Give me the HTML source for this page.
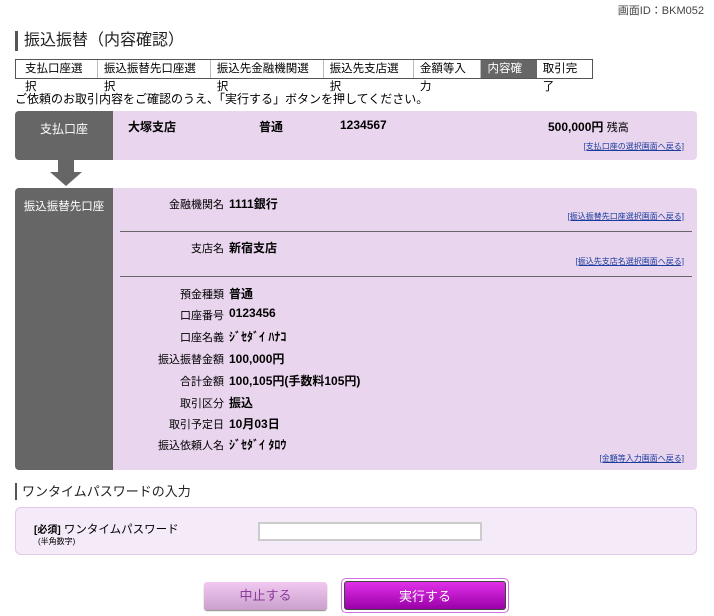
<!DOCTYPE html>
<html><head><meta charset="utf-8"><style>
*{margin:0;padding:0;box-sizing:border-box}
body{width:714px;height:616px;background:#fff;font-family:"Liberation Sans","Noto Sans CJK JP",sans-serif;color:#000;position:relative;overflow:hidden;font-size:12px}
.a{position:absolute;white-space:nowrap}
.lk{color:#1a3c9c;text-decoration:underline;font-size:8px}
.lb{position:absolute;right:490px;text-align:right;font-size:11px}
.v{position:absolute;left:229px;font-weight:bold;font-size:12px}
.bc{position:absolute;top:59px;left:15px;width:578px;height:20px;border:1px solid #555;display:flex;font-size:11.5px;line-height:18px}
.bc span{padding:0 4px 0 6px;border-right:1px solid #bbb}
</style></head><body>
<div class="a" style="right:10px;top:2px;font-size:11px;color:#444">画面ID：BKM052</div>
<div class="a" style="left:15px;top:31px;height:20px;border-left:3px solid #555;padding-left:6px;font-size:16px;line-height:20px;color:#222">振込振替（内容確認）</div>
<div class="bc"><span style="padding-left:9px">支払口座選択</span><span>振込振替先口座選択</span><span>振込先金融機関選択</span><span>振込先支店選択</span><span>金額等入力</span><span style="background:#666;color:#fff;border:none">内容確認</span><span style="border:none">取引完了</span></div>
<div class="a" style="left:15px;top:90px;font-size:12px">ご依頼のお取引内容をご確認のうえ、「実行する」ボタンを押してください。</div>

<div class="a" style="left:15px;top:111px;width:682px;height:49px;background:#e9d5ee;border-radius:4px"></div>
<div class="a" style="left:15px;top:111px;width:98px;height:49px;background:#666;border-radius:4px 0 0 4px;color:#fff;font-size:12px;text-align:center;line-height:36px">支払口座</div>
<div class="a" style="left:128px;top:118px;font-weight:bold">大塚支店</div>
<div class="a" style="left:259px;top:118px;font-weight:bold">普通</div>
<div class="a" style="left:340px;top:118px;font-weight:bold">1234567</div>
<div class="a" style="left:548px;top:118px;font-weight:bold">500,000円 <span style="font-weight:normal;font-size:11px">残高</span></div>
<div class="a lk" style="right:30px;top:141px">[支払口座の選択画面へ戻る]</div>
<div class="a" style="left:50px;top:160px;width:0;height:0;border-left:16px solid transparent;border-right:16px solid transparent;border-top:0"></div>
<div class="a" style="left:58px;top:160px;width:16px;height:12px;background:#666"></div>
<div class="a" style="left:50px;top:172px;width:0;height:0;border-left:16px solid transparent;border-right:16px solid transparent;border-top:14px solid #666"></div>

<div class="a" style="left:15px;top:188px;width:682px;height:282px;background:#e9d5ee;border-radius:4px"></div>
<div class="a" style="left:15px;top:188px;width:98px;height:282px;background:#666;border-radius:4px 0 0 4px;color:#fff;font-size:11.5px;text-align:center;padding-top:10px">振込振替先口座</div>
<div class="lb" style="top:196px">金融機関名</div><div class="v" style="top:195px">1111銀行</div>
<div class="a lk" style="right:30px;top:211px">[振込振替先口座選択画面へ戻る]</div>
<div class="a" style="left:120px;top:231px;width:572px;height:1px;background:#666"></div>
<div class="lb" style="top:240px">支店名</div><div class="v" style="top:239px">新宿支店</div>
<div class="a lk" style="right:30px;top:256px">[振込先支店名選択画面へ戻る]</div>
<div class="a" style="left:120px;top:276px;width:572px;height:1px;background:#666"></div>
<div class="lb" style="top:286px">預金種類</div><div class="v" style="top:285px">普通</div>
<div class="lb" style="top:307px">口座番号</div><div class="v" style="top:306px">0123456</div>
<div class="lb" style="top:329px">口座名義</div><div class="v" style="top:328px">ｼﾞｾﾀﾞｲ ﾊﾅｺ</div>
<div class="lb" style="top:351px">振込振替金額</div><div class="v" style="top:350px">100,000円</div>
<div class="lb" style="top:373px">合計金額</div><div class="v" style="top:372px">100,105円(手数料105円)</div>
<div class="lb" style="top:395px">取引区分</div><div class="v" style="top:394px">振込</div>
<div class="lb" style="top:416px">取引予定日</div><div class="v" style="top:415px">10月03日</div>
<div class="lb" style="top:437px">振込依頼人名</div><div class="v" style="top:436px">ｼﾞｾﾀﾞｲ ﾀﾛｳ</div>
<div class="a lk" style="right:30px;top:453px">[金額等入力画面へ戻る]</div>

<div class="a" style="left:15px;top:483px;height:17px;border-left:2px solid #555;padding-left:5px;font-size:13px;line-height:17px;color:#222">ワンタイムパスワードの入力</div>
<div class="a" style="left:15px;top:507px;width:682px;height:48px;background:#f5eaf7;border:1px solid #e4c8ea;border-radius:6px"></div>
<div class="a" style="left:34px;top:521px;font-size:11.5px"><b style="font-size:10px">[必須]</b> ワンタイムパスワード</div>
<div class="a" style="left:38px;top:536px;font-size:8px">(半角数字)</div>
<div class="a" style="left:258px;top:522px;width:224px;height:19px;background:#fff;border:2px solid #ccc"></div>

<div class="a" style="left:204px;top:582px;width:123px;height:28px;background:linear-gradient(#f0c8f0,#c9a0cc);border-radius:3px;color:#8a3c9a;font-size:13px;text-align:center;line-height:28px;box-shadow:0 1px 1px #888">中止する</div>
<div class="a" style="left:341px;top:578px;width:168px;height:35px;border:1px solid #d070e0;border-radius:5px;padding:2px">
<div style="width:100%;height:100%;background:linear-gradient(#e030e8,#9a00a8);border-radius:3px;color:#fff;font-size:13px;text-align:center;line-height:29px;border:1px solid #444">実行する</div></div>
</body></html>
